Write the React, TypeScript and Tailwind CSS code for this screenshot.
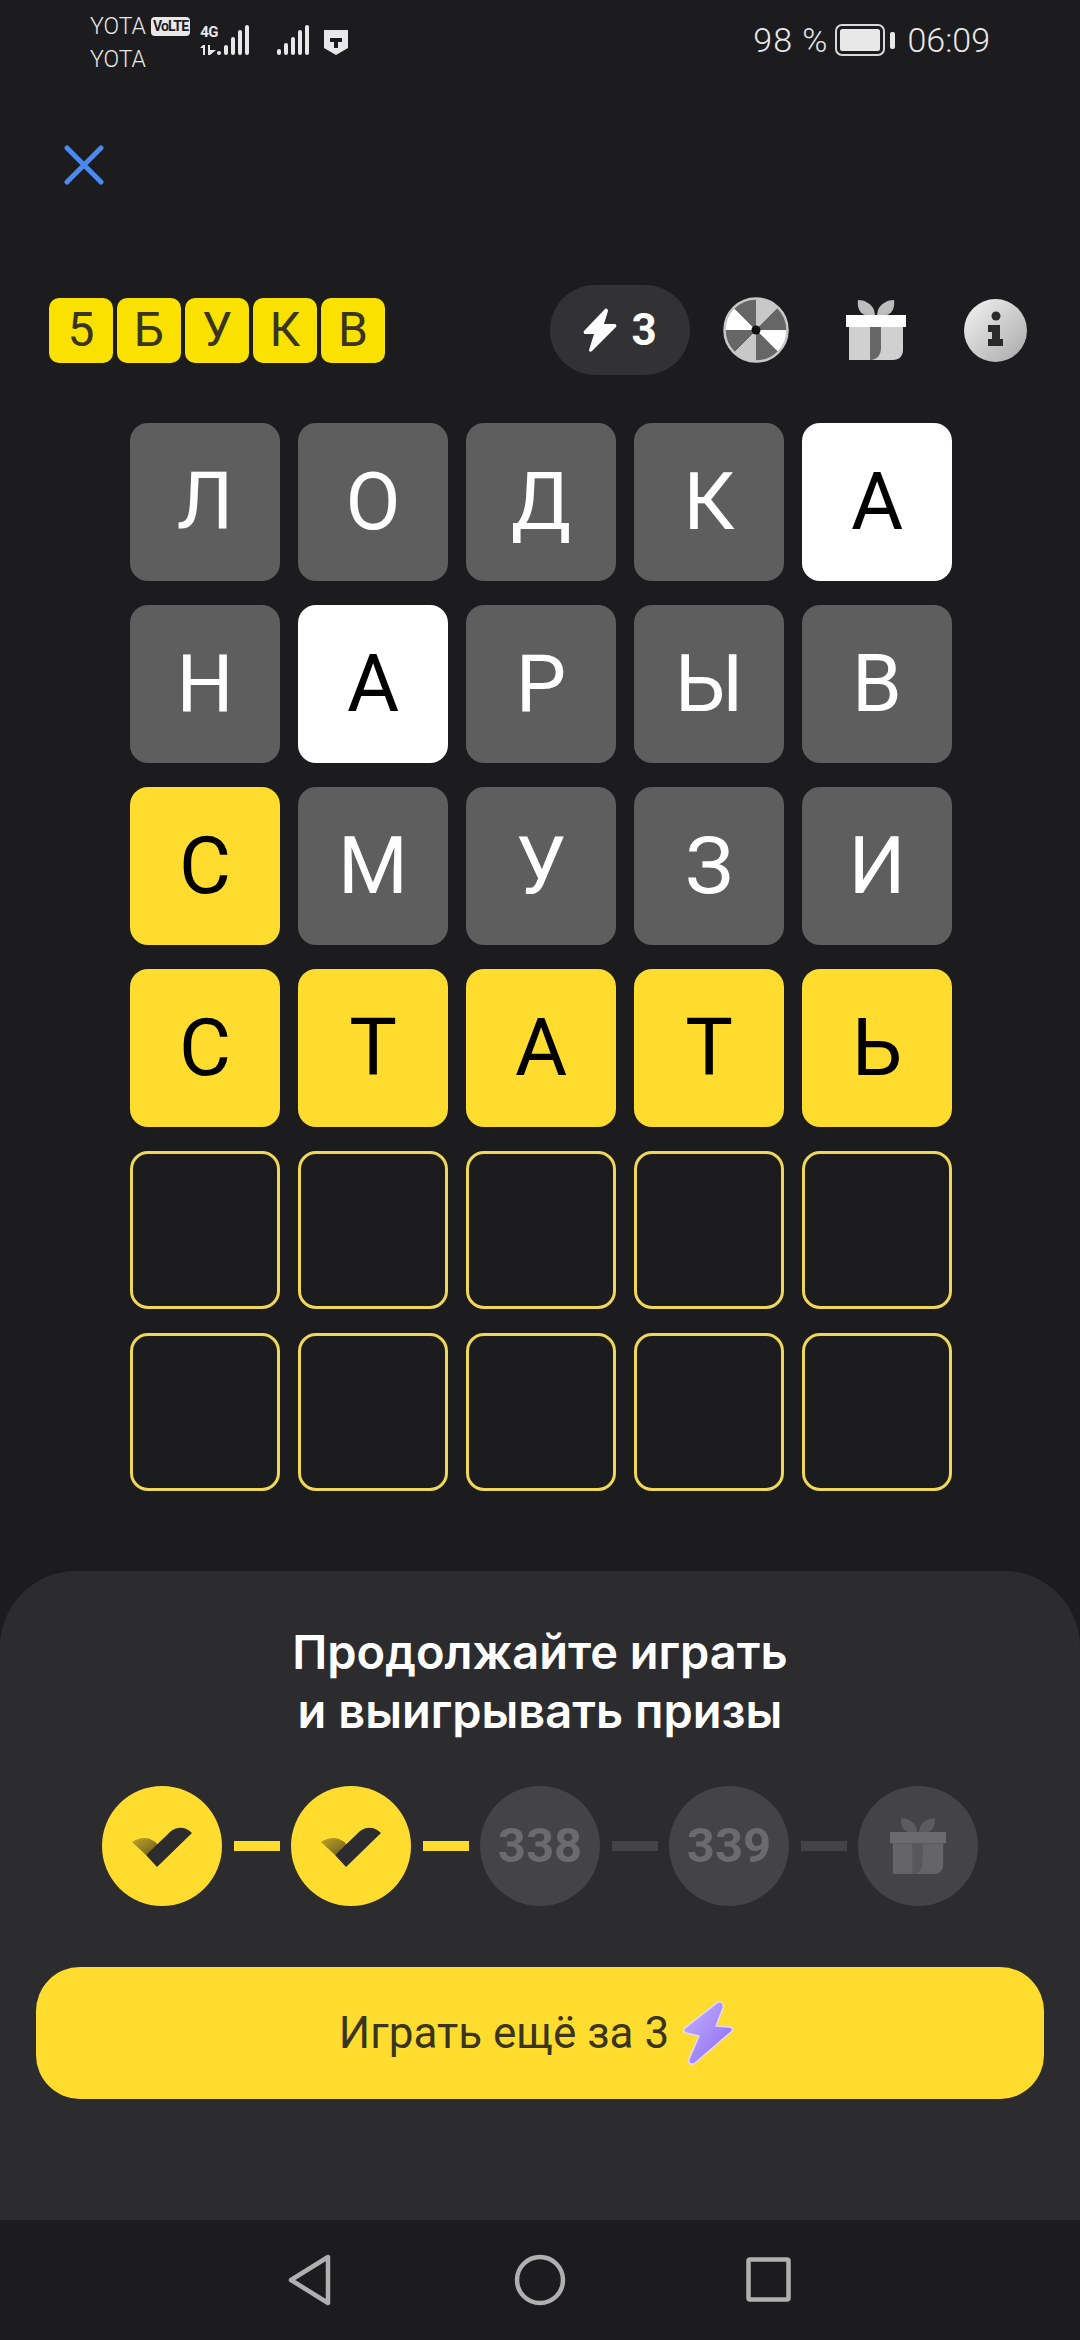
const LOGO = ["5", "Б", "У", "К", "В"];

type Tone = "gray" | "white" | "yellow" | "empty";

const ROWS: { letter: string; tone: Tone }[][] = [
  [
    { letter: "Л", tone: "gray" },
    { letter: "О", tone: "gray" },
    { letter: "Д", tone: "gray" },
    { letter: "К", tone: "gray" },
    { letter: "А", tone: "white" },
  ],
  [
    { letter: "Н", tone: "gray" },
    { letter: "А", tone: "white" },
    { letter: "Р", tone: "gray" },
    { letter: "Ы", tone: "gray" },
    { letter: "В", tone: "gray" },
  ],
  [
    { letter: "С", tone: "yellow" },
    { letter: "М", tone: "gray" },
    { letter: "У", tone: "gray" },
    { letter: "З", tone: "gray" },
    { letter: "И", tone: "gray" },
  ],
  [
    { letter: "С", tone: "yellow" },
    { letter: "Т", tone: "yellow" },
    { letter: "А", tone: "yellow" },
    { letter: "Т", tone: "yellow" },
    { letter: "Ь", tone: "yellow" },
  ],
  Array.from({ length: 5 }, () => ({ letter: "", tone: "empty" as Tone })),
  Array.from({ length: 5 }, () => ({ letter: "", tone: "empty" as Tone })),
];

const TONES: Record<Tone, string> = {
  gray: "bg-[#5e5e5e] text-white",
  white: "bg-white text-black",
  yellow: "bg-[#ffdc2e] text-black",
  empty: "border-[3px] border-[#efd75a]",
};

function Signal({ bars }: { bars: number[] }) {
  return (
    <div className="flex items-end gap-[3px]">
      {bars.map((h, i) => (
        <div key={i} className="w-[4px] rounded-[2px] bg-[#e8e8e8]" style={{ height: h }} />
      ))}
    </div>
  );
}

function StatusBar() {
  return (
    <div className="flex h-[80px] items-start justify-between pl-[90px] pr-[90px] pt-[10px] text-[#e8e8e8]">
      <div className="flex items-start">
        <div className="flex flex-col text-[23px] leading-[33px] font-light">
          <div className="flex items-center gap-[5px]">
            YOTA
            <span className="rounded-[4px] bg-[#e8e8e8] px-[2px] text-[14px] leading-[19px] font-bold tracking-[-0.8px] text-[#1c1c1e]">
              VoLTE
            </span>
          </div>
          <span>YOTA</span>
        </div>
        <div className="ml-[10px] mt-[15px] flex items-end gap-[1px]">
          <div className="flex w-[16px] flex-col">
            <span className="text-[15px] leading-[15px] font-bold tracking-[-0.5px]">4G</span>
            <svg viewBox="0 0 16 10" className="mt-[5px] h-[10px] w-[16px]" fill="#e8e8e8">
              <path d="M0 3L3 0H5V10H3V3H0Z" />
              <path d="M8 0H10V5H16L10 10H8Z" />
            </svg>
          </div>
          <Signal bars={[4, 10, 18, 25, 30]} />
        </div>
        <div className="ml-[28px] mt-[15px] flex h-[30px] items-end">
          <Signal bars={[6, 12, 18, 25, 30]} />
        </div>
        <svg viewBox="0 0 26 26" className="ml-[14px] mt-[20px] h-[26px] w-[26px]">
          <path d="M1 0H25V18L13 25L1 18Z" fill="#e8e8e8" />
          <path d="M7 8H19V12H15V18H11V12H7Z" fill="#1c1c1e" />
        </svg>
      </div>
      <div className="mt-[3px] flex items-center gap-[7px] text-[34px] leading-[54px] font-light">
        <span className="tracking-[1px]">98 %</span>
        <svg viewBox="0 0 60 32" className="h-[32px] w-[60px]">
          <rect x="1" y="1" width="48" height="30" rx="6" fill="none" stroke="#d8d8d8" strokeWidth="2" />
          <rect x="5" y="5" width="40" height="22" rx="2.5" fill="#e8e8e8" />
          <rect x="55" y="8" width="5" height="17" rx="2" fill="#e8e8e8" />
        </svg>
        <span className="ml-[5px]">06:09</span>
      </div>
    </div>
  );
}

function Wheel() {
  const colors = ["#c8c8c8", "#666666", "#ffffff", "#666666", "#c8c8c8", "#666666", "#ffffff", "#666666"];
  return (
    <svg viewBox="0 0 66 66" className="h-[66px] w-[66px]">
      {colors.map((c, i) => {
        const a = (i * Math.PI) / 4;
        const b = ((i + 1) * Math.PI) / 4;
        const r = 31;
        return (
          <path
            key={i}
            d={`M33 33L${33 + r * Math.sin(a)} ${33 - r * Math.cos(a)}A${r} ${r} 0 0 1 ${33 + r * Math.sin(b)} ${33 - r * Math.cos(b)}Z`}
            fill={c}
          />
        );
      })}
      <circle cx="33" cy="33" r="31.5" fill="none" stroke="#c8c8c8" strokeWidth="2.5" />
      <circle cx="33" cy="33" r="4.5" fill="#111" />
    </svg>
  );
}

function Gift({ bow, band, body, ribbon, className }: { bow: string; band: string; body: string; ribbon: string; className: string }) {
  return (
    <svg viewBox="0 0 60 60" className={className}>
      <path d="M12 0C18 0 25 3 28 10L29 15H19C13 13 11 6 12 0Z" fill={bow} />
      <path d="M48 0C42 0 35 3 32 10L31 15H41C47 13 49 6 48 0Z" fill={bow} />
      <rect x="0" y="15" width="60" height="12" fill={band} />
      <path d="M3 27H57V50C57 56 53 60 47 60H3Z" fill={body} />
      <path d="M24 27H35V48C35 55 31 60 24 60Z" fill={ribbon} />
    </svg>
  );
}

function Info() {
  return (
    <svg viewBox="0 0 63 63" className="h-[63px] w-[63px]">
      <defs>
        <linearGradient id="info-bg" x1="0" y1="0" x2="1" y2="1">
          <stop offset="0" stopColor="#f4f4f4" />
          <stop offset="1" stopColor="#a8a8a8" />
        </linearGradient>
      </defs>
      <circle cx="31.5" cy="31.5" r="31.5" fill="url(#info-bg)" />
      <circle cx="32" cy="17" r="4.5" fill="#2a2a2a" />
      <path d="M24 26H36V40H39V47H24V40H28V33H24Z" fill="#2a2a2a" />
    </svg>
  );
}

function Header() {
  return (
    <div className="mt-[100px] flex h-[90px] items-center pl-[49px]">
      <div className="flex gap-[4px]">
        {LOGO.map((ch) => (
          <div
            key={ch}
            className="flex h-[65px] w-[64px] items-center justify-center rounded-[10px] bg-[#fae100] text-[48px] text-[#3a3520]"
          >
            {ch}
          </div>
        ))}
      </div>
      <div className="ml-[165px] flex h-[90px] w-[140px] items-center justify-center gap-[14px] rounded-full bg-[#323234] text-white">
        <svg viewBox="0 0 34 44" className="h-[44px] w-[34px]">
          <path d="M22 1L1 23C0 24 1 26 2 26H11L6 42C6 44 8 44 9 43L33 19C34 18 33 16 32 16H21L25 3C25 1 23 0 22 1Z" fill="#fff" />
        </svg>
        <span className="text-[44px] leading-none font-bold">3</span>
      </div>
      <div className="ml-[33px]">
        <Wheel />
      </div>
      <div className="ml-[57px]">
        <Gift bow="#bdbdbd" band="#ffffff" body="#d0d0d0" ribbon="#666666" className="h-[60px] w-[60px]" />
      </div>
      <div className="ml-[58px]">
        <Info />
      </div>
    </div>
  );
}

function Check() {
  return (
    <svg viewBox="0 0 120 120" className="h-[120px] w-[120px]">
      <defs>
        <linearGradient id="check-fade" x1="0" y1="0" x2="1" y2="1">
          <stop offset="0" stopColor="#c2a626" />
          <stop offset="1" stopColor="#665a22" />
        </linearGradient>
      </defs>
      <path d="M30 56Q40 50 48 53Q53 55 56 59L44 69Z" fill="url(#check-fade)" />
      <path d="M44 69L55 81L90 47Q84 41 76 42Q70 43 65 49Z" fill="#2c2c2e" />
    </svg>
  );
}

function Progress() {
  const done = "flex h-[120px] w-[120px] items-center justify-center rounded-full bg-[#ffdc2e]";
  const todo = "flex h-[120px] w-[120px] items-center justify-center rounded-full bg-[#444446] text-[49px] font-bold text-[#6b6b6d]";
  return (
    <div className="mt-[46px] flex items-center gap-[11.5px] pl-[102px]">
      <div className={done}>
        <Check />
      </div>
      <div className="h-[10px] w-[46px] bg-[#ffdc2e]" />
      <div className={done}>
        <Check />
      </div>
      <div className="h-[10px] w-[46px] bg-[#ffdc2e]" />
      <div className={todo}>338</div>
      <div className="h-[10px] w-[46px] bg-[#444446]" />
      <div className={todo}>339</div>
      <div className="h-[10px] w-[46px] bg-[#444446]" />
      <div className={todo}>
        <Gift bow="#5c5c5e" band="#6b6b6d" body="#656567" ribbon="#58585a" className="h-[58px] w-[56px]" />
      </div>
    </div>
  );
}

export default function App() {
  return (
    <div
      className="flex h-[2340px] w-[1080px] flex-col overflow-hidden bg-[#1c1c1e]"
      style={{ fontFamily: "Roboto, 'Noto Sans', sans-serif" }}
    >
      <StatusBar />
      <div className="mt-[65px] pl-[64px]">
        <svg viewBox="0 0 40 40" className="h-[40px] w-[40px]" fill="none" stroke="#4a8af0" strokeWidth="5" strokeLinecap="round">
          <path d="M3 3L37 37M37 3L3 37" />
        </svg>
      </div>
      <Header />
      <div className="mt-[48px] flex flex-col gap-[24px] pl-[130px]">
        {ROWS.map((row, r) => (
          <div key={r} className="flex gap-[18px]">
            {row.map((cell, c) => (
              <div
                key={c}
                className={`flex h-[158px] w-[150px] items-center justify-center rounded-[18px] text-[80px] ${TONES[cell.tone]}`}
              >
                {cell.letter}
              </div>
            ))}
          </div>
        ))}
      </div>
      <div className="mt-[80px] flex-1 rounded-t-[76px] bg-[#2c2c2e] pt-[51px]">
        <div className="text-center font-['Inter'] text-[47px] leading-[59px] font-semibold text-white">
          Продолжайте играть
          <br />
          и выигрывать призы
        </div>
        <Progress />
        <div className="mx-[36px] mt-[61px] flex h-[132px] items-center justify-center gap-[14px] rounded-[44px] bg-[#ffdc2e] pr-[8px] text-[44px] text-[#3a3520]">
          Играть ещё за 3
          <svg viewBox="0 0 50 64" className="h-[64px] w-[50px]">
            <defs>
              <linearGradient id="bolt-fill" x1="0" y1="0" x2="1" y2="1">
                <stop offset="0" stopColor="#c4b2ff" />
                <stop offset="1" stopColor="#8a68ee" />
              </linearGradient>
            </defs>
            <path
              d="M35 1C38 0 41 3 40 7L33 25L47 26C50 27 50 29 48 31L12 62C8 65 5 62 6 58L16 35L3 32C0 31 0 29 2 27Z"
              fill="url(#bolt-fill)"
              stroke="#e2d8ff"
              strokeWidth="1.5"
            />
          </svg>
        </div>
      </div>
      <div className="flex h-[120px] items-start bg-[#1c1c1e] pt-[33px]">
        <svg viewBox="0 0 46 54" className="ml-[286px] h-[54px] w-[46px]" fill="none" stroke="#b0b0b0" strokeWidth="4.5" strokeLinejoin="round">
          <path d="M42 4V50L5 27Z" />
        </svg>
        <svg viewBox="0 0 54 54" className="ml-[181px] h-[54px] w-[54px]" fill="none" stroke="#b0b0b0" strokeWidth="4.5">
          <circle cx="27" cy="27" r="23" />
        </svg>
        <svg viewBox="0 0 45 45" className="ml-[179px] mt-[4px] h-[45px] w-[45px]" fill="none" stroke="#b0b0b0" strokeWidth="4.5" strokeLinejoin="round">
          <rect x="2.5" y="2.5" width="40" height="40" rx="1.5" />
        </svg>
      </div>
    </div>
  );
}
